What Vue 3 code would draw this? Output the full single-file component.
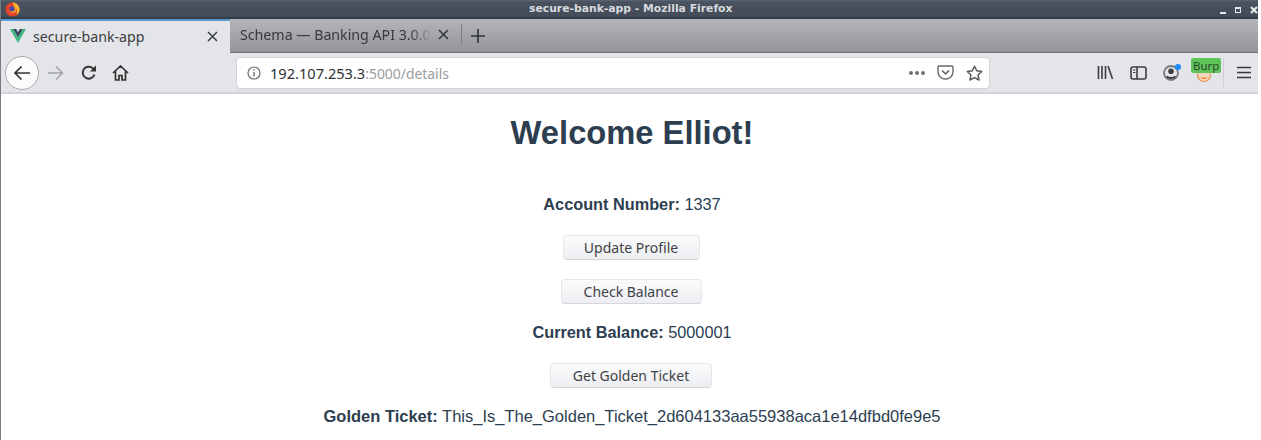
<template>
  <div class="window">
    <div class="titlebar">
      <svg class="ff-logo" width="15" height="15" viewBox="0 0 16 16">
        <circle cx="8" cy="8" r="7.500" fill="#e8402a" />
        <path d="M8 .5A7.500 7.500 0 0 1 15.500 8c0 3-1.500 5-3.500 6 1.500-3 1-6-1-8C9.500 4.500 9 2.500 8 .5z" fill="#fbb52b" />
        <circle cx="8.300" cy="8" r="3.700" fill="#f59a23" />
        <circle cx="7.400" cy="7.300" r="2.800" fill="#4a3fa8" />
      </svg>
      <span class="title">secure-bank-app - Mozilla Firefox</span>
      <div class="winbtns">
        <span class="win-min"></span>
        <span class="win-max"></span>
        <svg width="8" height="8" viewBox="0 0 8 8">
          <path d="M1 1l6 6M7 1L1 7" stroke="#eceef0" stroke-width="2" />
        </svg>
      </div>
    </div>

    <div class="tabstrip">
      <div class="tab active">
        <svg width="16" height="14" viewBox="0 0 16 14">
          <path d="M0 0h3.200L8 8.300 12.800 0H16L8 14z" fill="#41b883" />
          <path d="M3.200 0h3L8 3.200 9.800 0h3L8 8.300z" fill="#35495e" />
        </svg>
        <span class="tab-label">secure-bank-app</span>
        <svg class="tab-x" width="11" height="11" viewBox="0 0 11 11">
          <path d="M1 1l9 9M10 1l-9 9" stroke="#3a3d42" stroke-width="1.500" />
        </svg>
      </div>
      <div class="tab other">
        <span class="tab-label fade">Schema — Banking API 3.0.0</span>
        <svg class="tab-x" width="11" height="11" viewBox="0 0 11 11">
          <path d="M1 1l9 9M10 1l-9 9" stroke="#33363b" stroke-width="1.500" />
        </svg>
      </div>
      <div class="tab-sep"></div>
      <svg class="tab-plus" width="14" height="14" viewBox="0 0 14 14">
        <path d="M7 0v14M0 7h14" stroke="#2f3236" stroke-width="1.600" />
      </svg>
    </div>

    <div class="navbar">
      <div class="back-btn">
        <svg width="18" height="16" viewBox="0 0 18 16">
          <path d="M17 8H2M8.500 1.500L2 8l6.500 6.500" fill="none" stroke="#333" stroke-width="1.700" />
        </svg>
      </div>
      <svg class="forward" width="17" height="16" viewBox="0 0 17 16">
        <path d="M1 8h14M9 1.500L15.500 8 9 14.500" fill="none" stroke="#a3a5a8" stroke-width="1.600" />
      </svg>
      <svg class="reload" width="16" height="16" viewBox="0 0 16 16">
        <path d="M13.500 9.500A6 6 0 1 1 11.500 3L14 5" fill="none" stroke="#333" stroke-width="1.900" />
        <path d="M15 0.500V6.500H9z" fill="#333" />
      </svg>
      <svg class="home" width="17" height="16" viewBox="0 0 17 16">
        <path d="M1 8l7.500-7L16 8M3.500 6.500V15H7v-4.500h3V15h3.500V6.500" fill="none" stroke="#333" stroke-width="1.700" />
      </svg>

      <div class="urlbar">
        <svg class="info" width="14" height="14" viewBox="0 0 14 14">
          <circle cx="7" cy="7" r="6" fill="none" stroke="#6b6d70" stroke-width="1.200" />
          <path d="M7 6v4.500M7 3.300v1.500" stroke="#6b6d70" stroke-width="1.400" />
        </svg>
        <span class="url"><span class="host">192.107.253.3</span>:5000/details</span>
        <span class="dots"><i></i><i></i><i></i></span>
        <svg class="pocket" width="17" height="15" viewBox="0 0 17 15">
          <path d="M1 2.200C1 1.500 1.500 1 2.200 1h12.600c.7 0 1.200.5 1.200 1.200V7a7.500 7 0 0 1-15 0z" fill="none" stroke="#66686b" stroke-width="1.400" />
          <path d="M5 5.500l3.500 3.300L12 5.500" fill="none" stroke="#66686b" stroke-width="1.700" />
        </svg>
        <svg class="star" width="17" height="16" viewBox="0 0 17 16">
          <path d="M8.500 1.200l2.200 4.600 5 .7-3.600 3.500.9 5-4.500-2.400L4 15l.9-5L1.300 6.500l5-.7z" fill="none" stroke="#55575a" stroke-width="1.500" stroke-linejoin="round" />
        </svg>
      </div>

      <div class="tools">
        <svg width="17" height="15" viewBox="0 0 17 15">
          <path d="M1.500 1v13M5 1v13M8.500 1v13M11 1l4.500 13" fill="none" stroke="#3c3e41" stroke-width="1.600" />
        </svg>
        <svg width="17" height="14" viewBox="0 0 17 14">
          <rect x="1" y="1" width="15" height="12" rx="2" fill="none" stroke="#3c3e41" stroke-width="1.600" />
          <path d="M7 1v12" stroke="#3c3e41" stroke-width="1.600" />
          <path d="M3 4h2.500M3 6.500h2.500" stroke="#3c3e41" stroke-width="1.100" />
        </svg>
        <span class="account">
          <svg width="16" height="16" viewBox="0 0 16 16">
            <circle cx="8" cy="8" r="7" fill="none" stroke="#77797c" stroke-width="1.800" />
            <circle cx="8" cy="6.300" r="2.800" fill="#3c3e41" />
            <path d="M3.500 11.500c2.500 2 6.500 2 9 0" fill="none" stroke="#3c3e41" stroke-width="1.800" />
          </svg>
          <i class="badge-dot"></i>
        </span>
        <span class="burp">
          <svg class="burp-ico" width="16" height="16" viewBox="0 0 16 16">
            <circle cx="8" cy="8" r="6.500" fill="#f5d9bf" stroke="#e8944c" stroke-width="1.200" />
            <path d="M4.500 10.500c1.500 2 5.500 2 7 0z" fill="#ee8a35" />
          </svg>
          <span class="burp-tag">Burp</span>
        </span>
        <div class="tool-sep"></div>
        <svg width="14" height="13" viewBox="0 0 14 13">
          <path d="M0 1.500h14M0 6.500h14M0 11.500h14" stroke="#36383b" stroke-width="1.700" />
        </svg>
      </div>
    </div>

    <div class="page">
      <h1>Welcome Elliot!</h1>
      <p class="acct"><b>Account Number:</b> 1337</p>
      <button class="btn b1">Update Profile</button>
      <button class="btn b2">Check Balance</button>
      <p class="bal"><b>Current Balance:</b> 5000001</p>
      <button class="btn b3">Get Golden Ticket</button>
      <p class="ticket"><b>Golden Ticket:</b> This_Is_The_Golden_Ticket_2d604133aa55938aca1e14dfbd0fe9e5</p>
    </div>
  </div>
</template>

<script setup>
</script>

<style>
html, body { background: #fff; overflow: hidden; }
</style>

<style scoped>
.window {
  width: 1258px;
  height: 440px;
  box-sizing: border-box;
  border-left: 1px solid #777b80;
  display: flex;
  flex-direction: column;
  overflow: hidden;
  font-family: "Noto Sans", "Open Sans", sans-serif;
}

/* window title */
.titlebar {
  height: 19px;
  flex: none;
  background: linear-gradient(#5a6472 0, #48515d 12%, #434c58 85%, #2f353c 100%);
  display: flex;
  align-items: center;
  position: relative;
  padding-left: 4px;
}
.ff-logo { flex: none; }
.title {
  position: absolute;
  left: 528px;
  top: 2px;
  font-family: "DejaVu Sans", sans-serif;
  font-size: 10.800px;
  font-weight: bold;
  line-height: 14px;
  color: #d8dade;
}
.winbtns {
  margin-left: auto;
  display: flex;
  align-items: center;
  gap: 9px;
}
.win-min { width: 6px; height: 2px; background: #e6e8ea; margin-top: 6px; }
.win-max { width: 6px; height: 6px; border: 1px solid #e6e8ea; border-top-width: 2px; box-sizing: border-box; }

/* tabs */
.tabstrip {
  height: 34px;
  flex: none;
  display: flex;
  align-items: stretch;
  background: linear-gradient(#b3b5ba, #939598);
  border-bottom: 1px solid #6f7174;
  box-sizing: border-box;
}
.tab {
  display: flex;
  align-items: center;
  box-sizing: border-box;
  font-size: 14.200px;
  color: #3b3d41;
}
.tab.active {
  width: 229px;
  padding: 0 12px 2px 9px;
  background: #e3e5e9;
  border-top: 2px solid #5c9ad6;
  margin-bottom: -1px;
}
.tab.active .tab-label { margin-left: 7px; }
.tab-x { margin-left: auto; flex: none; }
.tab.other { width: 231px; padding: 0 12px 3px 10px; color: #37393c; }
.fade {
  width: 192px;
  white-space: nowrap;
  overflow: hidden;
  -webkit-mask-image: linear-gradient(90deg, #000 170px, transparent 192px);
  mask-image: linear-gradient(90deg, #000 170px, transparent 192px);
}
.tab-sep { width: 1px; background: #7c7e81; margin: 5px 0 7px; }
.tab-plus { align-self: center; margin: 0 0 0 9px; }

/* nav */
.navbar {
  height: 41px;
  flex: none;
  display: flex;
  align-items: center;
  background: #e3e5e9;
  border-bottom: 2px solid #d2d3d6;
  box-sizing: border-box;
  padding-left: 4px;
}
.back-btn {
  width: 34px;
  height: 34px;
  box-sizing: border-box;
  border-radius: 50%;
  background: #fbfbfc;
  border: 1px solid #a9abae;
  display: flex;
  align-items: center;
  justify-content: center;
  flex: none;
}
.forward { margin-left: 8px; flex: none; }
.reload { margin-left: 17px; flex: none; }
.home { margin-left: 15px; flex: none; }
.urlbar {
  margin-left: 108px;
  width: 752px;
  height: 30px;
  background: #fff;
  border-radius: 4px;
  box-shadow: 0 0 0 1px #d5d6d9, 0 1px 2px rgba(0, 0, 0, .12);
  display: flex;
  align-items: center;
  box-sizing: border-box;
  padding: 0 6px 0 10px;
  flex: none;
}
.url { margin-left: 9px; font-size: 13.900px; color: #9a9c9f; }
.host { color: #2f3134; font-size: 14.600px; }
.dots { margin-left: auto; display: flex; gap: 2px; margin-top: 1px; }
.dots i { width: 4px; height: 4px; border-radius: 50%; background: #6f7174; }
.pocket { margin-left: 12px; }
.star { margin-left: 12px; }
.tools {
  display: flex;
  align-items: center;
  margin-left: 108px;
  gap: 16px;
}
.account { position: relative; display: flex; }
.badge-dot {
  position: absolute;
  right: -2px;
  top: -1px;
  width: 6px;
  height: 6px;
  border-radius: 50%;
  background: #1a8cff;
}
.burp { position: relative; display: flex; width: 24px; justify-content: center; margin-left: -3px; }
.burp-ico { margin-top: 4px; }
.burp-tag {
  position: absolute;
  top: -5px;
  left: -1px;
  background: #5ec45a;
  color: #2b4a2a;
  font-size: 11.500px;
  line-height: 15px;
  padding: 0 2px;
  border-radius: 2px;
}
.tool-sep { width: 1px; height: 30px; background: #d0d1d4; margin: 0 -3px 0 -9px; }

/* page */
.page {
  flex: 1;
  background: #fff;
  color: #2c3e50;
  font-family: "Liberation Sans", Arial, sans-serif;
  display: flex;
  flex-direction: column;
  align-items: center;
  padding-left: 5px;
}
h1 {
  margin: 19px 0 0;
  font-size: 32.700px;
  line-height: 40px;
  font-weight: bold;
}
p { margin: 0; font-size: 16.300px; line-height: 20px; white-space: nowrap; }
.acct { margin-top: 41px; }
.bal { margin-top: 18px; }
.ticket { margin-top: 18px; font-size: 16.500px; }
.btn {
  font-family: "Noto Sans", sans-serif;
  font-size: 14px;
  height: 25px;
  padding: 0;
  margin-right: 2px;
  color: #3f4246;
  background: linear-gradient(#fbfbfc, #eceef1);
  border: 1px solid #e6e7ea;
  border-bottom-color: #d5d6d9;
  border-radius: 4px;
  box-sizing: border-box;
}
.b1 { width: 137px; margin-top: 21px; }
.b2 { width: 141px; margin-top: 19px; }
.b3 { width: 162px; margin-top: 21px; }
</style>
